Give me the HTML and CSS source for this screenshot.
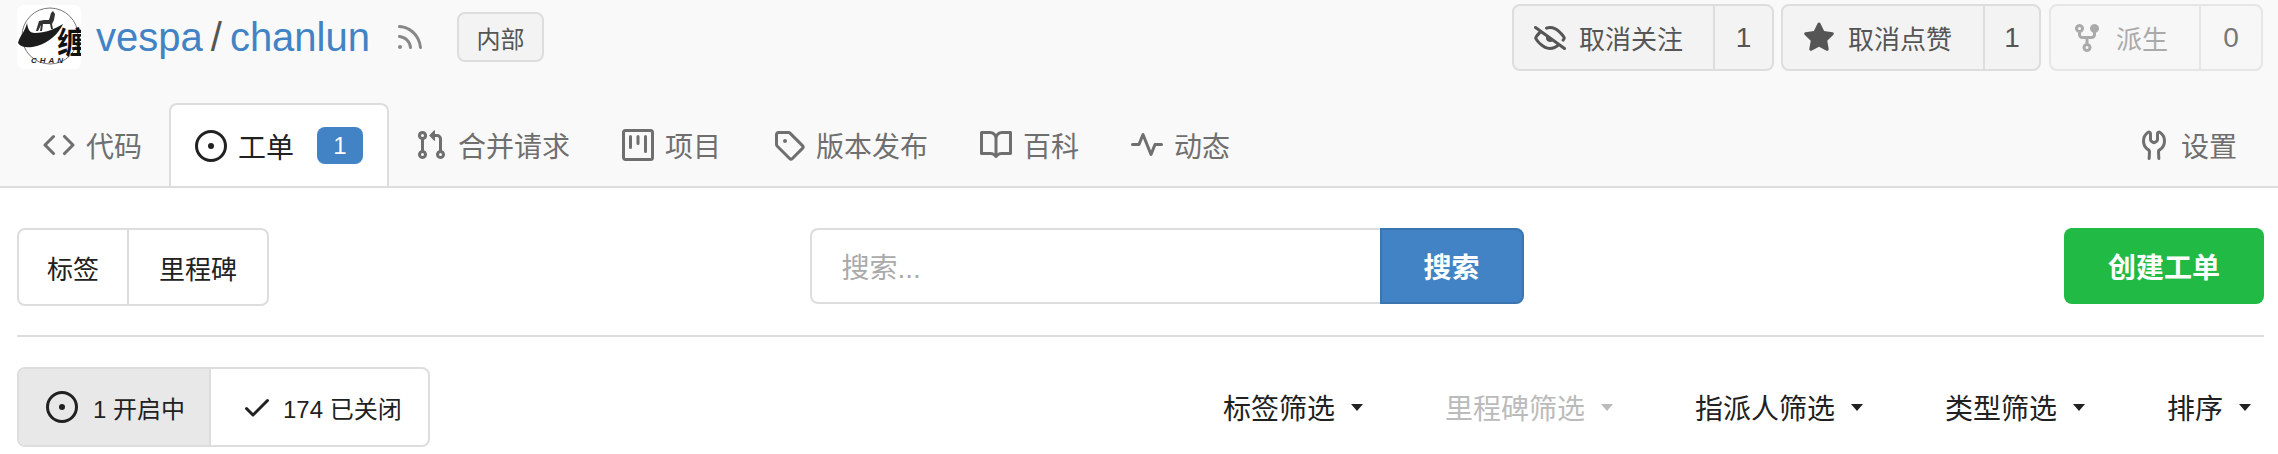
FILE: index.html
```html
<!DOCTYPE html>
<html lang="zh-CN">
<head>
<meta charset="utf-8">
<title>vespa/chanlun</title>
<link rel="stylesheet" href="styles.css">
</head>
<body>
<header class="repo-header">
  <div class="repo-top">
    <div class="repo-title">
      <svg class="avatar" viewBox="0 0 64 64">
        <rect width="64" height="64" rx="7" fill="#fff"/>
        <circle cx="33" cy="31" r="28" fill="none" stroke="#777" stroke-width="1"/>
        <path d="M1 38 C3 30 8 27 10 18 C11 25 13 28 18 28 C28 28 38 24 46 19 C42 28 32 38 20 41 C12 43 4 43 1 38Z" fill="#1c1c1c"/>
        <path d="M19 26 L22 16 L27 15 L32 15 L34 8 L36 6 L38 9 L37 15 L35 19 L36 24 L34 24 L33 19 L26 19 L25 26 L23 26 L24 20 L21 26Z" fill="#333"/>
        <text class="logo-han" x="40" y="48">缠</text>
        <text class="logo-latin" x="14" y="58">CHAN</text>
      </svg>
      <a class="owner" href="#">vespa</a><span class="slash">/</span><a class="owner" href="#">chanlun</a>
      <svg class="icon rss" viewBox="0 0 16 16"><path d="M2.002 2.725a.75.75 0 01.797-.699C8.79 2.42 13.58 7.21 13.974 13.201a.75.75 0 11-1.497.098 10.502 10.502 0 00-9.776-9.776.75.75 0 01-.699-.798zM2 13a1 1 0 112 0 1 1 0 01-2 0zm.84-5.99a.75.75 0 10-.179 1.489 5.251 5.251 0 014.84 4.84.75.75 0 101.49-.178A6.75 6.75 0 002.84 7.01z"/></svg>
      <span class="internal">内部</span>
    </div>
    <div class="repo-actions">
      <div class="counter watch">
        <a class="counter-main"><svg class="icon act" viewBox="0 0 16 16"><path d="M.143 2.31a.75.75 0 011.047-.167l14.5 10.5a.75.75 0 11-.88 1.214l-2.248-1.628C11.346 13.19 9.792 14 8 14c-1.981 0-3.67-.992-4.933-2.078C1.797 10.832.88 9.577.43 8.9a1.618 1.618 0 010-1.797c.353-.533.995-1.42 1.868-2.305L.31 3.357A.75.75 0 01.143 2.31zm3.386 3.378a14.21 14.21 0 00-1.85 2.244.12.12 0 00-.022.068c0 .021.006.045.022.068.412.621 1.242 1.75 2.366 2.717C5.175 11.758 6.527 12.5 8 12.5c1.195 0 2.31-.488 3.29-1.191L9.063 9.695A2 2 0 016.058 7.52l-2.53-1.832zM8 3.5c-.516 0-1.017.09-1.499.251a.75.75 0 11-.473-1.423A6.23 6.23 0 018 2c1.981 0 3.67.992 4.933 2.078 1.27 1.091 2.187 2.345 2.637 3.023a1.619 1.619 0 010 1.798c-.11.166-.248.365-.41.587a.75.75 0 11-1.21-.887c.148-.201.272-.382.371-.53a.119.119 0 000-.137c-.412-.621-1.242-1.75-2.366-2.717C10.825 4.242 9.473 3.5 8 3.5z"/></svg>取消关注</a>
        <span class="counter-num">1</span>
      </div>
      <div class="counter star">
        <a class="counter-main"><svg class="icon act" viewBox="0 0 16 16"><path d="M8 .25a.75.75 0 01.673.418l1.882 3.815 4.21.612a.75.75 0 01.416 1.279l-3.046 2.97.719 4.192a.75.75 0 01-1.088.791L8 12.347l-3.766 1.98a.75.75 0 01-1.088-.79l.72-4.194L.818 6.374a.75.75 0 01.416-1.28l4.21-.611L7.327.668A.75.75 0 018 .25z"/></svg>取消点赞</a>
        <span class="counter-num">1</span>
      </div>
      <div class="counter fork disabled">
        <a class="counter-main"><svg class="icon act" viewBox="0 0 16 16"><path d="M5 3.25a.75.75 0 11-1.5 0 .75.75 0 011.5 0zm0 2.122a2.25 2.25 0 10-1.5 0v.878A2.25 2.25 0 005.75 8.5h1.5v2.128a2.251 2.251 0 101.5 0V8.5h1.5a2.25 2.25 0 002.25-2.25v-.878a2.25 2.25 0 10-1.5 0v.878a.75.75 0 01-.75.75h-4.5A.75.75 0 015 6.25v-.878zm3.75 7.378a.75.75 0 11-1.5 0 .75.75 0 011.5 0zm3-8.75a.75.75 0 100-1.5.75.75 0 000 1.5z"/></svg>派生</a>
        <span class="counter-num">0</span>
      </div>
    </div>
  </div>
  <nav class="tabs">
    <a class="tab t-code"><svg class="icon tab-icon" viewBox="0 0 16 16"><path d="M4.72 3.22a.75.75 0 011.06 1.06L2.06 8l3.72 3.72a.75.75 0 11-1.06 1.06L.47 8.53a.75.75 0 010-1.06l4.25-4.25zm6.56 0a.75.75 0 10-1.06 1.06L13.94 8l-3.72 3.72a.75.75 0 101.06 1.06l4.25-4.25a.75.75 0 000-1.06l-4.25-4.25z"/></svg>代码</a>
    <a class="tab active"><svg class="icon tab-icon" viewBox="0 0 16 16"><path d="M8 9.5a1.5 1.5 0 100-3 1.5 1.5 0 000 3z"/><path fill-rule="evenodd" d="M8 0a8 8 0 100 16A8 8 0 008 0zM1.5 8a6.5 6.5 0 1113 0 6.5 6.5 0 01-13 0z"/></svg>工单<span class="tab-badge">1</span></a>
    <a class="tab"><svg class="icon tab-icon" viewBox="0 0 16 16"><path fill-rule="evenodd" d="M7.177 3.073L9.573.677A.25.25 0 0110 .854v4.792a.25.25 0 01-.427.177L7.177 3.427a.25.25 0 010-.354zM3.75 2.5a.75.75 0 100 1.5.75.75 0 000-1.5zm-2.25.75a2.25 2.25 0 113 2.122v5.256a2.251 2.251 0 11-1.5 0V5.372A2.25 2.25 0 011.5 3.25zM11 2.5h-1V4h1a1 1 0 011 1v5.628a2.251 2.251 0 101.5 0V5A2.5 2.5 0 0011 2.5zm1 10.25a.75.75 0 111.5 0 .75.75 0 01-1.5 0zM3.75 12a.75.75 0 100 1.5.75.75 0 000-1.5z"/></svg>合并请求</a>
    <a class="tab"><svg class="icon tab-icon" viewBox="0 0 16 16"><path fill-rule="evenodd" d="M1.75 0A1.75 1.75 0 000 1.75v12.5C0 15.216.784 16 1.75 16h12.5A1.75 1.75 0 0016 14.25V1.75A1.75 1.75 0 0014.25 0H1.75zM1.5 1.75a.25.25 0 01.25-.25h12.5a.25.25 0 01.25.25v12.5a.25.25 0 01-.25.25H1.75a.25.25 0 01-.25-.25V1.75zM11.75 3a.75.75 0 00-.75.75v7.5a.75.75 0 001.5 0v-7.5a.75.75 0 00-.75-.75zm-8.25.75a.75.75 0 011.5 0v5.5a.75.75 0 01-1.5 0v-5.5zM8 3a.75.75 0 00-.75.75v3.5a.75.75 0 001.5 0v-3.5A.75.75 0 008 3z"/></svg>项目</a>
    <a class="tab"><svg class="icon tab-icon" viewBox="0 0 16 16"><path fill-rule="evenodd" d="M2.5 7.775V2.75a.25.25 0 01.25-.25h5.025a.25.25 0 01.177.073l6.25 6.25a.25.25 0 010 .354l-5.025 5.025a.25.25 0 01-.354 0l-6.25-6.25a.25.25 0 01-.073-.177zm-1.5 0V2.75C1 1.784 1.784 1 2.75 1h5.025c.464 0 .91.184 1.238.513l6.25 6.25a1.75 1.75 0 010 2.474l-5.026 5.026a1.75 1.75 0 01-2.474 0l-6.25-6.25A1.75 1.75 0 011 7.775zM6 5a1 1 0 100 2 1 1 0 000-2z"/></svg>版本发布</a>
    <a class="tab"><svg class="icon tab-icon" viewBox="0 0 16 16"><path fill-rule="evenodd" d="M0 1.75A.75.75 0 01.75 1h4.253c1.227 0 2.317.59 3 1.501A3.744 3.744 0 0111.006 1h4.245a.75.75 0 01.75.75v10.5a.75.75 0 01-.75.75h-4.507a2.25 2.25 0 00-1.591.659l-.622.621a.75.75 0 01-1.06 0l-.622-.621A2.25 2.25 0 005.258 13H.75a.75.75 0 01-.75-.75V1.75zm8.755 3a2.25 2.25 0 012.25-2.25H14.5v9h-3.757c-.71 0-1.4.201-1.992.572l.004-7.322zm-1.504 7.324l.004-5.073-.002-2.253A2.25 2.25 0 005.003 2.5H1.5v9h3.757a3.75 3.75 0 011.994.574z"/></svg>百科</a>
    <a class="tab"><svg class="icon tab-icon" viewBox="0 0 16 16"><path d="M6 2a.75.75 0 01.696.471L10 10.731l1.304-3.26A.75.75 0 0112 7h3.25a.75.75 0 010 1.5h-2.742l-1.812 4.528a.75.75 0 01-1.392 0L6 4.77 4.696 8.03A.75.75 0 014 8.5H.75a.75.75 0 010-1.5h2.742l1.812-4.529A.75.75 0 016 2z"/></svg>动态</a>
    <a class="tab settings"><svg class="icon tab-icon" viewBox="0 0 16 16"><path d="M5.433 2.304A4.494 4.494 0 003.5 6c0 1.598.832 3.002 2.09 3.802.518.328.929.923.902 1.64v.008l-.164 3.337a.75.75 0 11-1.498-.073l.163-3.33c.002-.085-.05-.216-.207-.316A5.996 5.996 0 012 6a5.994 5.994 0 012.567-4.92 1.482 1.482 0 011.673-.04c.462.296.76.827.76 1.423v2.82c0 .082.041.16.11.206l.75.51a.25.25 0 00.28 0l.75-.51A.25.25 0 009 5.282V2.463c0-.596.298-1.127.76-1.423a1.482 1.482 0 011.673.04A5.994 5.994 0 0114 6a5.996 5.996 0 01-2.786 5.068c-.157.1-.209.23-.207.315l.163 3.33a.75.75 0 11-1.498.074l-.164-3.337v-.008c-.027-.717.384-1.312.902-1.64A4.496 4.496 0 0012.5 6a4.494 4.494 0 00-1.933-3.696c-.024.017-.067.067-.067.159v2.82a1.75 1.75 0 01-.768 1.447l-.75.51a1.75 1.75 0 01-1.964 0l-.75-.51A1.75 1.75 0 015.5 5.283V2.463c0-.092-.043-.142-.067-.159z"/></svg>设置</a>
  </nav>
</header>
<main class="content">
  <section class="toolbar">
    <div class="btn-group labels">
      <a class="seg seg-label">标签</a><a class="seg seg-mile">里程碑</a>
    </div>
    <form class="search">
      <span class="search-input">搜索...</span><span class="search-btn">搜索</span>
    </form>
    <a class="create">创建工单</a>
  </section>
  <hr class="rule">
  <section class="filterbar">
    <div class="btn-group states">
      <a class="state on"><svg class="icon state-icon" viewBox="0 0 16 16"><path d="M8 9.5a1.5 1.5 0 100-3 1.5 1.5 0 000 3z"/><path fill-rule="evenodd" d="M8 0a8 8 0 100 16A8 8 0 008 0zM1.5 8a6.5 6.5 0 1113 0 6.5 6.5 0 01-13 0z"/></svg>1 开启中</a>
      <a class="state off"><svg class="icon check" viewBox="0 0 16 16"><path d="M13.78 4.22a.75.75 0 010 1.06l-7.25 7.25a.75.75 0 01-1.06 0L2.22 9.28a.75.75 0 011.06-1.06L6 10.94l6.72-6.72a.75.75 0 011.06 0z"/></svg>174 已关闭</a>
    </div>
    <div class="filters">
      <a class="filter">标签筛选<i class="caret"></i></a>
      <a class="filter muted">里程碑筛选<i class="caret"></i></a>
      <a class="filter">指派人筛选<i class="caret"></i></a>
      <a class="filter">类型筛选<i class="caret"></i></a>
      <a class="filter">排序<i class="caret"></i></a>
    </div>
  </section>
</main>
</body>
</html>
```

FILE: styles.css
```css
* { box-sizing: border-box; }
html, body { margin: 0; padding: 0; }
body {
  background: #fff;
  color: #212121;
  font-family: "Liberation Sans", "Noto Sans CJK SC", sans-serif;
  font-size: 28px;
  height: 454px;
  overflow: hidden;
}
a { color: inherit; text-decoration: none; }
.icon { fill: currentColor; display: block; flex: none; }

.repo-header { background: #f9f9f9; border-bottom: 2px solid #ddd; height: 188px; padding: 4px 15px 0 17px; display: flex; flex-direction: column; }
.repo-top { display: flex; justify-content: space-between; height: 101px; }
.repo-title { display: flex; align-items: center; height: 66px; }
.avatar { width: 64px; height: 64px; margin-right: 15px; flex: none; }
.logo-han { font-size: 30px; font-weight: 700; font-family: "Noto Sans CJK SC", sans-serif; fill: #111; }
.logo-latin { font-size: 8px; font-style: italic; font-weight: 700; letter-spacing: 3px; fill: #222; }
.owner { color: #4183c4; font-size: 40px; line-height: 50px; }
.slash { color: #555; font-size: 40px; margin: 0 8px; }
.rss { width: 32px; height: 32px; margin-left: 24px; color: #888; }
.internal { margin-left: 31px; height: 50px; width: 87px; border: 2px solid #ddd; border-radius: 8px; background: #f3f3f3; color: #555; font-size: 24px; display: flex; align-items: center; justify-content: center; }

.repo-actions { display: flex; gap: 7px; }
.counter { display: flex; height: 67px; border: 2px solid #ddd; border-radius: 8px; background: #f3f3f3; color: #555; font-size: 26px; }
.counter-main { display: flex; align-items: center; border-right: 2px solid #ddd; padding-left: 20px; }
.counter-num { display: flex; align-items: center; justify-content: center; font-size: 28px; }
.act { width: 32px; height: 32px; margin-right: 13px; }
.watch { width: 262px; }
.watch .counter-main { width: 201px; }
.star { width: 260px; }
.star .counter-main { width: 202px; }
.fork { width: 214px; margin-left: 1px; }
.fork .counter-main { width: 150px; }
.watch .counter-num, .star .counter-num, .fork .counter-num { flex: 1; }
.disabled { color: #aaa; background: #f7f7f7; border-color: #e6e6e6; }
.disabled .counter-main { border-color: #e6e6e6; }
.disabled .counter-num { color: #777; }

.tabs { display: flex; height: 83px; }
.tab { display: flex; align-items: center; color: #6f6f6f; padding: 0 26px; height: 83px; white-space: nowrap; }
.tab-icon { width: 32px; height: 32px; margin-right: 11px; }
.t-code { margin-right: 1px; }
.active { background: #fff; color: #212121; border: 2px solid #ddd; border-bottom: 0; border-radius: 8px 8px 0 0; padding: 0 24px; height: 83px; }
.tab-badge { display: flex; align-items: center; justify-content: center; width: 46px; height: 37px; margin-left: 23px; border-radius: 8px; background: #4183c4; color: #fff; font-size: 24px; font-weight: 400; }
.settings { margin-left: auto; }

.content { padding: 0 14px 0 17px; }
.toolbar { display: flex; align-items: flex-start; justify-content: space-between; padding-top: 40px; height: 147px; }
.btn-group { display: flex; border: 2px solid #ddd; border-radius: 8px; background: #fff; overflow: hidden; }
.labels { height: 78px; width: 252px; font-size: 26px; }
.seg { display: flex; align-items: center; justify-content: center; }
.seg-label { width: 110px; border-right: 2px solid #ddd; }
.seg-mile { flex: 1; }
.search { display: flex; height: 76px; }
.search-input { width: 570px; border: 2px solid #ddd; border-right: 0; border-radius: 8px 0 0 8px; padding-left: 30px; display: flex; align-items: center; color: #aaa; background: #fff; }
.search-btn { width: 144px; background: #4183c4; border: 2px solid #3a75b0; border-radius: 0 8px 8px 0; color: #fff; font-weight: 700; display: flex; align-items: center; justify-content: center; }
.create { width: 200px; height: 76px; background: #21ba45; color: #fff; border-radius: 8px; font-weight: 700; display: flex; align-items: center; justify-content: center; }
.rule { border: 0; height: 2px; background: #ddd; margin: 0; }

.filterbar { display: flex; justify-content: space-between; padding-top: 30px; }
.states { height: 80px; width: 413px; font-size: 24px; }
.state { display: flex; align-items: center; white-space: nowrap; }
.on { width: 192px; background: #e8e8e8; border-right: 2px solid #ddd; padding-left: 27px; }
.off { flex: 1; padding-left: 30px; }
.state-icon { width: 32px; height: 32px; margin-right: 15px; }
.check { width: 32px; height: 32px; margin-right: 10px; }
.filters { display: flex; align-items: center; height: 80px; padding-right: 13px; }
.filter { display: flex; align-items: center; margin-left: 82px; color: #212121; white-space: nowrap; }
.muted { color: #bbb; }
.caret { width: 0; height: 0; margin-left: 16px; border-style: solid; border-width: 7px 6.5px 0; border-color: currentColor transparent transparent; }
```
